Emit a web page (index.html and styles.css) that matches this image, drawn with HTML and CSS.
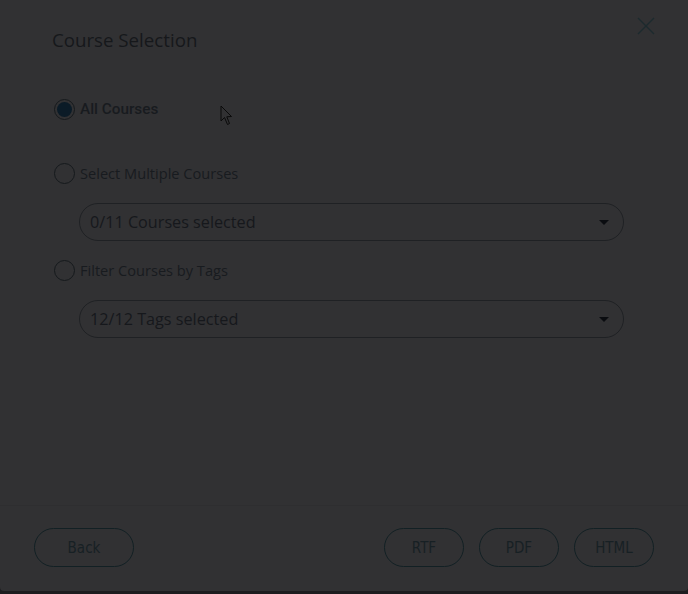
FILE: index.html
```html
<!DOCTYPE html>
<html>
<head>
<meta charset="utf-8">
<link rel="stylesheet" href="styles.css">
</head>
<body>
<div class="dialog">
  <div class="body">
    <div class="head">
      <h1 class="title">Course Selection</h1>
      <button class="close" aria-label="Close">
        <svg width="18" height="18" viewBox="0 0 18 18"><path d="M1 1L17 17M17 1L1 17" stroke="#1c2a2e" stroke-width="1.4" fill="none"/></svg>
      </button>
    </div>
    <label class="opt first"><span class="radio checked"><span class="dot"></span></span><span class="lbl bold">All Courses</span></label>
    <label class="opt"><span class="radio"></span><span class="lbl">Select Multiple Courses</span></label>
    <div class="select"><span>0/11 Courses selected</span><span class="caret"></span></div>
    <label class="opt"><span class="radio"></span><span class="lbl">Filter Courses by Tags</span></label>
    <div class="select"><span>12/12 Tags selected</span><span class="caret"></span></div>
  </div>
  <div class="footer">
    <button class="btn">Back</button>
    <div class="right">
      <button class="btn sm">RTF</button>
      <button class="btn sm">PDF</button>
      <button class="btn sm">HTML</button>
    </div>
  </div>
  <svg class="cursor" width="14" height="22" viewBox="0 0 14 22"><path d="M1 1L1 16L4.5 12.5L7.5 19.5L9.5 18.5L6.8 11.8L11.5 11.5Z" fill="#313133" stroke="#0a0a0a" stroke-width="1"/></svg>
</div>
</body>
</html>
```
FILE: styles.css
```css
html, body { margin: 0; padding: 0; background: #1d1d1f; }
body { width: 688px; height: 594px; overflow: hidden; }
.dialog {
  position: relative;
  width: 688px; height: 591px;
  background: #313133;
  border-radius: 0 0 4px 4px;
  display: flex; flex-direction: column;
  font-family: "Open Sans", "Lato", sans-serif;
  color: #16191d;
}
.body { padding: 0 0 0 54px; flex: 1; }
.head { display: flex; justify-content: space-between; align-items: flex-start; }
.title {
  margin: 27px 0 0 -2px; font-family: "Open Sans", sans-serif; font-weight: 400;
  font-size: 18.7px; color: #16181b; letter-spacing: 0;
}
.close { background: none; border: 0; padding: 0; margin: 17px 33px 0 0; width: 18px; height: 18px; }
.opt { display: flex; align-items: center; gap: 5px; height: 22px; }
.opt.first { margin-top: 46px; margin-bottom: 42px; }
.radio {
  width: 19px; height: 19px; border: 1.3px solid #15191c; border-radius: 50%;
  display: flex; align-items: center; justify-content: center; box-sizing: content-box;
}
.dot { width: 15px; height: 15px; border-radius: 50%; background: #0b1b27; }
.lbl { font-size: 14.6px; color: #181b1f; }
.lbl.bold { font-family: "Roboto", sans-serif; font-weight: 500; font-size: 15.3px; }
.select {
  margin: 19px 0 18px 25px; width: 545px; height: 38px;
  border: 1px solid #1f2124; border-radius: 19px;
  display: flex; align-items: center; justify-content: space-between;
  padding: 0 14px 0 10px; box-sizing: border-box; font-size: 16.2px; color: #16181c;
}
.caret { width: 0; height: 0; border-left: 5px solid transparent; border-right: 5px solid transparent; border-top: 5px solid #0a0c10; }
.footer {
  border-top: 1px solid #2e2e30;
  height: 86px; box-sizing: border-box;
  display: flex; justify-content: space-between; align-items: flex-start;
  padding: 22px 34px 0 34px;
}
.right { display: flex; gap: 15px; }
.btn {
  width: 100px; height: 39px; border: 1px solid #122024; border-radius: 20px;
  background: transparent; color: #172024;
  font-family: "DejaVu Sans Condensed", "DejaVu Sans", sans-serif; font-stretch: condensed;
  font-size: 15px; padding: 0;
}
.btn.sm { width: 80px; }
.cursor { position: absolute; left: 220px; top: 105px; }
```
